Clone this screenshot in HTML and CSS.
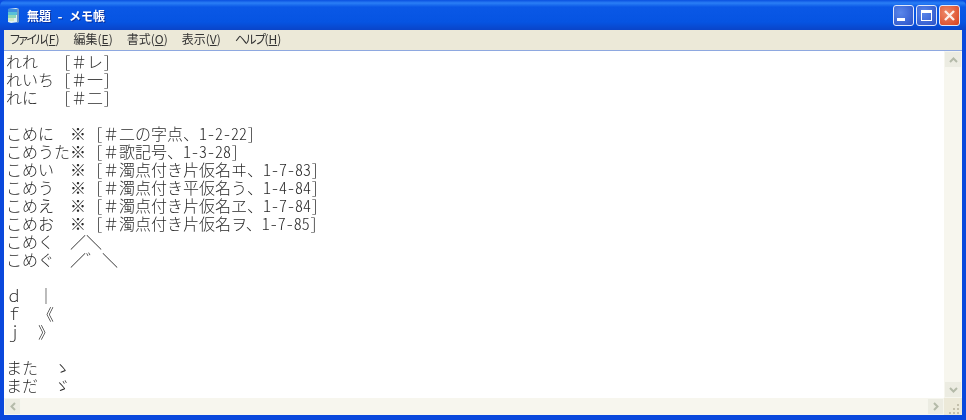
FILE: index.html
```html
<!DOCTYPE html>
<html lang="ja">
<head>
<meta charset="utf-8">
<title>無題 - メモ帳</title>
<link rel="stylesheet" href="styles.css">
</head>
<body>
<div class="window">
  <header class="titlebar">
    <svg class="app-icon" width="14" height="17" viewBox="0 0 14 17"><path d="M1 2l8-1 3 1v13l-8 1-3-1z" fill="#dff0f2"/><path d="M1 2h9v3H1z" fill="#3f8fe0"/><path d="M1 5h9v3H1z" fill="#58c0d8"/><path d="M1 8h8v3H1z" fill="#8fd8b8"/><path d="M1 11h6v3H1z" fill="#cfe8c8"/><path d="M10 2l2 0v13l-2 1z" fill="#6f9ac8"/></svg>
    <span class="title">無題 - メモ帳</span>
    <div class="controls">
      <button class="ctl ctl-blue"><span class="g-min"></span></button>
      <button class="ctl ctl-blue"><span class="g-max"></span></button>
      <button class="ctl ctl-red"><svg width="13" height="13" viewBox="0 0 13 13"><path d="M2 2l9 9M11 2l-9 9" stroke="#fdeee8" stroke-width="2.4"/></svg></button>
    </div>
  </header>
  <nav class="menubar">
    <span><span class="kana">ファイル</span>(<u>F</u>)</span><span>編集(<u>E</u>)</span><span>書式(<u>O</u>)</span><span>表示(<u>V</u>)</span><span><span class="kana2">ヘルプ</span>(<u>H</u>)</span>
  </nav>
  <div class="client">
    <div class="middle">
      <main class="text">
        <div class="row"><span class="k k1">れれ</span><span class="h">[</span><span>＃レ</span><span class="h">]</span></div>
        <div class="row"><span class="k k1">れいち</span><span class="h">[</span><span>＃一</span><span class="h">]</span></div>
        <div class="row"><span class="k k1">れに</span><span class="h">[</span><span>＃二</span><span class="h">]</span></div>
        <div class="row">&nbsp;</div>
        <div class="row"><span class="k k2">こめに</span><span class="k k3">※</span><span class="h">[</span><span>＃二の字点、</span><span class="h">1-2-22]</span></div>
        <div class="row"><span class="k k2">こめうた</span><span class="k k3">※</span><span class="h">[</span><span>＃歌記号、</span><span class="h">1-3-28]</span></div>
        <div class="row"><span class="k k2">こめい</span><span class="k k3">※</span><span class="h">[</span><span>＃濁点付き片仮名ヰ、</span><span class="h">1-7-83]</span></div>
        <div class="row"><span class="k k2">こめう</span><span class="k k3">※</span><span class="h">[</span><span>＃濁点付き平仮名う、</span><span class="h">1-4-84]</span></div>
        <div class="row"><span class="k k2">こめえ</span><span class="k k3">※</span><span class="h">[</span><span>＃濁点付き片仮名ヱ、</span><span class="h">1-7-84]</span></div>
        <div class="row"><span class="k k2">こめお</span><span class="k k3">※</span><span class="h">[</span><span>＃濁点付き片仮名ヲ、</span><span class="h">1-7-85]</span></div>
        <div class="row"><span class="k k2">こめく</span><span>／＼</span></div>
        <div class="row"><span class="k k2">こめぐ</span><span>／゛＼</span></div>
        <div class="row">&nbsp;</div>
        <div class="row"><span class="k k4">ｄ</span><span>｜</span></div>
        <div class="row"><span class="k k4">ｆ</span><span>《</span></div>
        <div class="row"><span class="k k4">ｊ</span><span>》</span></div>
        <div class="row">&nbsp;</div>
        <div class="row"><span class="k k5">また</span><span>ゝ</span></div>
        <div class="row"><span class="k k5">まだ</span><span>ゞ</span></div>
      </main>
      <aside class="vscroll">
        <div class="sbtn"><svg width="9" height="6" viewBox="0 0 9 6"><path d="M1 5l3.500-3.500L8 5" fill="none" stroke="#b4baa9" stroke-width="2"/></svg></div>
        <div class="track"></div>
        <div class="sbtn"><svg width="9" height="6" viewBox="0 0 9 6"><path d="M1 1l3.500 3.500L8 1" fill="none" stroke="#b4baa9" stroke-width="2"/></svg></div>
      </aside>
    </div>
    <div class="hbar">
      <div class="hbtn"><svg width="6" height="9" viewBox="0 0 6 9"><path d="M5 1L1.500 4.500 5 8" fill="none" stroke="#b4baa9" stroke-width="2"/></svg></div>
      <div class="track"></div>
      <div class="hbtn"><svg width="6" height="9" viewBox="0 0 6 9"><path d="M1 1l3.500 3.500L1 8" fill="none" stroke="#b4baa9" stroke-width="2"/></svg></div>
      <div class="grip"><svg width="12" height="12" viewBox="0 0 12 12"><path d="M9 2h2v2H9zM9 6h2v2H9zM5 6h2v2H5zM9 10h2v2H9zM5 10h2v2H5zM1 10h2v2H1z" fill="#c4c0ac"/></svg></div>
    </div>
  </div>
</div>
</body>
</html>
```
FILE: styles.css
```css
* { box-sizing: border-box; }
html, body { margin: 0; width: 966px; height: 420px; overflow: hidden; background: #0a4be0; }
.window {
  width: 966px; height: 420px; display: flex; flex-direction: column;
  background: #0a48dc; padding: 0 4px 5px;
  border-radius: 6px 6px 0 0;
  font-family: "Noto Sans CJK JP", sans-serif;
  filter: blur(0.4px);
}
.titlebar {
  height: 30px; flex: none; margin: 0 -4px; padding: 0 6px 0 7px; display: flex; align-items: center; gap: 6px;
  border-radius: 6px 6px 0 0;
  background: linear-gradient(#0a50e0 0, #2a7ff5 3px, #0a58e6 7px, #0654e2 22px, #0a44c8 30px);
}
.app-icon { flex: none; }
.title { color: #fff; font-size: 12px; font-weight: 700; padding-top: 1px; text-shadow: 1px 1px #0a2f9c; font-feature-settings: "hwid"; }
.controls { margin-left: auto; display: flex; gap: 2px; }
.ctl {
  width: 21px; height: 21px; padding: 0; border: 1px solid #dfe8fb; border-radius: 3px;
  display: flex; align-items: center; justify-content: center;
  background: radial-gradient(circle at 35% 35%, #5a86ea, #2a52c8);
}
.ctl-red { background: radial-gradient(circle at 35% 35%, #ee8a6a, #d8401c); }
.g-min { width: 8px; height: 3px; background: #fff; margin: 9px 6px 0 0; }
.g-max { width: 11px; height: 11px; border: 1px solid #fff; border-top-width: 3px; }
.menubar {
  height: 21px; flex: none; background: #ece9d8; border-bottom: 1px solid #8ea8e0;
  display: flex; align-items: center; padding: 0 0 4px 6px; gap: 14px;
  font-size: 12px; color: #333; font-feature-settings: "palt";
}
.kana { letter-spacing: -1.7px; }
.kana2 { letter-spacing: -1.6px; }
.client { flex: 1; min-height: 0; display: flex; flex-direction: column; background: #fff; }
.middle { flex: 1; min-height: 0; display: flex; }
.text {
  flex: 1; padding: 1px 0 0 2px; font-size: 16px; line-height: 18px; color: #2a2a2a;
  font-weight: 300;
}
.row { display: flex; height: 18px; white-space: pre; }
.h { font-feature-settings: "hwid"; }
.k { flex: none; }
.k1 { width: 57px; }
.k2 { width: 64px; }
.k3 { width: 25px; }
.k4 { width: 32px; }
.k5 { width: 48px; }
.vscroll { width: 18px; flex: none; display: flex; flex-direction: column; background: #f7f6ee; }
.track { flex: 1; }
.sbtn { height: 17px; flex: none; display: flex; align-items: center; justify-content: center; background: #ecece2; border: 1px solid #f6f6ee; }
.hbar { height: 17px; flex: none; display: flex; background: #f7f6ee; }
.hbtn { width: 17px; flex: none; display: flex; align-items: center; justify-content: center; background: #ecece2; border: 1px solid #f6f6ee; }
.grip { width: 18px; flex: none; background: #ece9d8; display: flex; align-items: flex-end; justify-content: flex-end; padding: 0 2px 1px 0; }
```
